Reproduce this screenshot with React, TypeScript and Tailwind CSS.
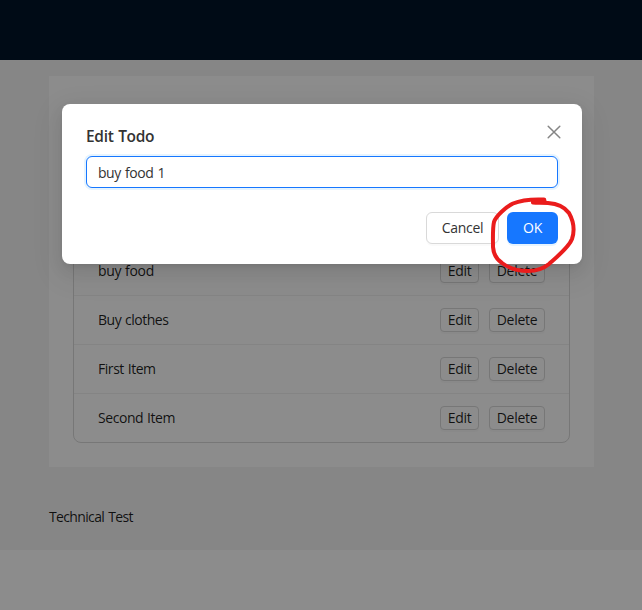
const todos = [
  { title: 'buy food', tracking: 'tracking-[-0.32px]' },
  { title: 'Buy clothes', tracking: 'tracking-[-0.48px]' },
  { title: 'First Item', tracking: 'tracking-[-0.45px]' },
  { title: 'Second Item', tracking: 'tracking-[-0.43px]' },
];

function SmallButton({ label, className }: { label: string; className: string }) {
  return (
    <button
      className={`flex h-6 items-center justify-center rounded border border-[#d9d9d9] bg-white shadow-[0_2px_0_rgba(0,0,0,0.02)] ${className}`}
    >
      {label}
    </button>
  );
}

function TodoPage() {
  return (
    <div className="h-full">
      <header className="h-[60px] bg-[#001529]" />
      <div className="h-[490px] bg-[#f5f5f5] pt-4 pr-12 pl-[49px]">
        <main className="h-[391px] bg-white px-6 pt-[170px]">
          <ul className="rounded-lg border border-[#d9d9d9]">
            {todos.map(({ title, tracking }) => (
              <li
                key={title}
                className="flex h-[49px] items-center justify-between border-b border-[#f0f0f0] px-6 last:h-12 last:border-b-0"
              >
                <span className={`[word-spacing:0.6px] ${tracking}`}>{title}</span>
                <div className="flex gap-2.5">
                  <SmallButton label="Edit" className="w-[39px]" />
                  <SmallButton label="Delete" className="w-14" />
                </div>
              </li>
            ))}
          </ul>
        </main>
        <footer className="pt-[39px] tracking-[-0.65px] [word-spacing:1px]">Technical Test</footer>
      </div>
    </div>
  );
}

function EditDialog() {
  return (
    <div
      role="dialog"
      className="absolute top-[104px] left-[62px] h-40 w-[520px] rounded-lg bg-white px-6 py-5 shadow-[0_6px_16px_0_rgba(0,0,0,0.08),0_3px_6px_-4px_rgba(0,0,0,0.12),0_9px_28px_8px_rgba(0,0,0,0.05)]"
    >
      <h2 className="mb-2 h-6 text-[15.5px] leading-6 font-semibold tracking-[-0.32px] text-[#333] [word-spacing:1px]">Edit Todo</h2>
      <button aria-label="Close" className="absolute top-[21px] right-[21px] text-[#858585]">
        <svg width="14" height="14" viewBox="0 0 14 14" fill="none" stroke="currentColor" strokeWidth="1.5" strokeLinecap="round">
          <path d="M1.2 1.2 12.8 12.800M12.8 1.2 1.2 12.800" />
        </svg>
      </button>
      <input
        defaultValue="buy food 1"
        className="block h-8 w-full rounded-md border border-[#1677ff] bg-white px-[11px] tracking-[-0.46px] text-[#333] shadow-[0_0_0_2px_rgba(5,145,255,0.1)] outline-none [word-spacing:1px]"
      />
      <div className="mt-6 flex justify-end gap-2">
        <button className="h-8 w-[73px] rounded-md border border-[#d9d9d9] bg-white text-[#333] shadow-[0_2px_0_rgba(0,0,0,0.02)]">
          Cancel
        </button>
        <button className="h-8 w-[51px] rounded-md bg-[#1677ff] text-white shadow-[0_2px_0_rgba(5,145,255,0.1)]">OK</button>
      </div>
    </div>
  );
}

export default function App() {
  return (
    <div className="relative h-[610px] w-[642px] overflow-hidden bg-white font-['Open_Sans','Noto_Sans',sans-serif] text-sm leading-[22px] tracking-[-0.3px] text-black/88">
      <TodoPage />
      <div className="absolute inset-0 bg-black/45" />
      <EditDialog />
      <svg
        className="pointer-events-none absolute top-[190px] left-[482px]"
        width="104"
        height="92"
        viewBox="482 190 104 92"
        fill="none"
        stroke="#ea1c1c"
        strokeWidth="4"
        strokeLinecap="round"
        strokeLinejoin="round"
      >
        <path d="M544 199.500C532 199 521 200 513 203.500C506 207 496 216 494 222C492.500 228 493 238 493 247C493.500 254 496 259 502 263C510 269 519 271 528 271C537 271 543 269 549 264C558 256 569 247 572 239C575 230 574 222 569 213C564 206 556 203.500 548 203C542 202.500 537 203 533 202.500" />
        <path d="M534 201.500 544 200.500" strokeWidth="5" />
      </svg>
    </div>
  );
}
